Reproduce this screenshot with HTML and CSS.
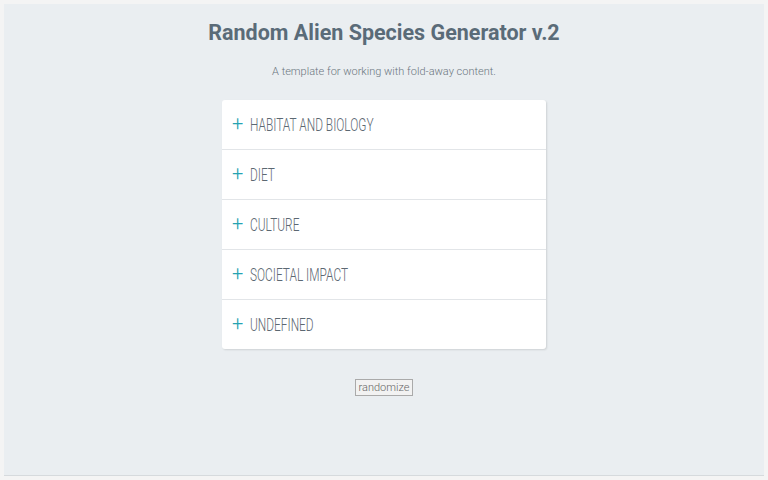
FILE: index.html
```html
<!DOCTYPE html>
<html>
<head>
<meta charset="utf-8">
<link rel="stylesheet" href="styles.css">
</head>
<body>
<div class="panel">
  <h1 class="title">Random Alien Species Generator v.2</h1>
  <p class="subtitle"><span class="narrow">A template for working with fold-away content.</span></p>
  <div class="card">
    <div class="row"><span class="plus">+</span><span class="label">HABITAT AND BIOLOGY</span></div>
    <div class="row"><span class="plus">+</span><span class="label">DIET</span></div>
    <div class="row"><span class="plus">+</span><span class="label">CULTURE</span></div>
    <div class="row"><span class="plus">+</span><span class="label">SOCIETAL IMPACT</span></div>
    <div class="row"><span class="plus">+</span><span class="label">UNDEFINED</span></div>
  </div>
  <div class="actions"><button class="btn">randomize</button></div>
</div>
</body>
</html>
```
FILE: styles.css
```css
html, body { margin: 0; padding: 0; }
body {
  background: #f4f4f4;
  padding: 4px;
  height: 480px;
  box-sizing: border-box;
  font-family: Roboto, "Liberation Sans", sans-serif;
}
.panel {
  background: #eaeef1;
  height: 472px;
  box-sizing: border-box;
  border-bottom: 1px solid #d6dadd;
  padding-top: 17px;
  display: flex;
  flex-direction: column;
  align-items: center;
}
.title {
  margin: 0;
  font-size: 21.5px;
  font-weight: 700;
  color: #5a6b78;
  line-height: 24px;
}
.subtitle {
  margin: 20px 0 0;
  font-size: 11px;
  font-weight: 300;
  color: #6a7680;
  line-height: 14px;
}
.card {
  margin-top: 21px;
  width: 324px;
  background: #fff;
  border-radius: 3px;
  box-shadow: 1px 1px 2px rgba(0,0,0,0.12);
}
.row {
  height: 50px;
  box-sizing: border-box;
  display: flex;
  align-items: center;
  padding-left: 10px;
  border-top: 1px solid #e2e5e8;
}
.row:first-child { border-top: none; height: 49px; }
.plus {
  color: #26a3b2;
  font-size: 20px;
  font-weight: 300;
  width: 18px;
  line-height: 20px;
  margin-top: -3px;
}
.label {
  display: inline-block;
  font-size: 18px;
  font-weight: 300;
  color: #5c6872;
  transform: scaleX(0.66);
  transform-origin: left center;
  white-space: nowrap;
}
.actions { margin-top: 27px; }
.btn {
  font-family: Roboto, "Liberation Sans", sans-serif;
  font-size: 11px;
  font-weight: 300;
  color: #666;
  background: #f2f2f2;
  border: 1px solid #aaa;
  padding: 1px 3px;
  line-height: 13px;
}
```
